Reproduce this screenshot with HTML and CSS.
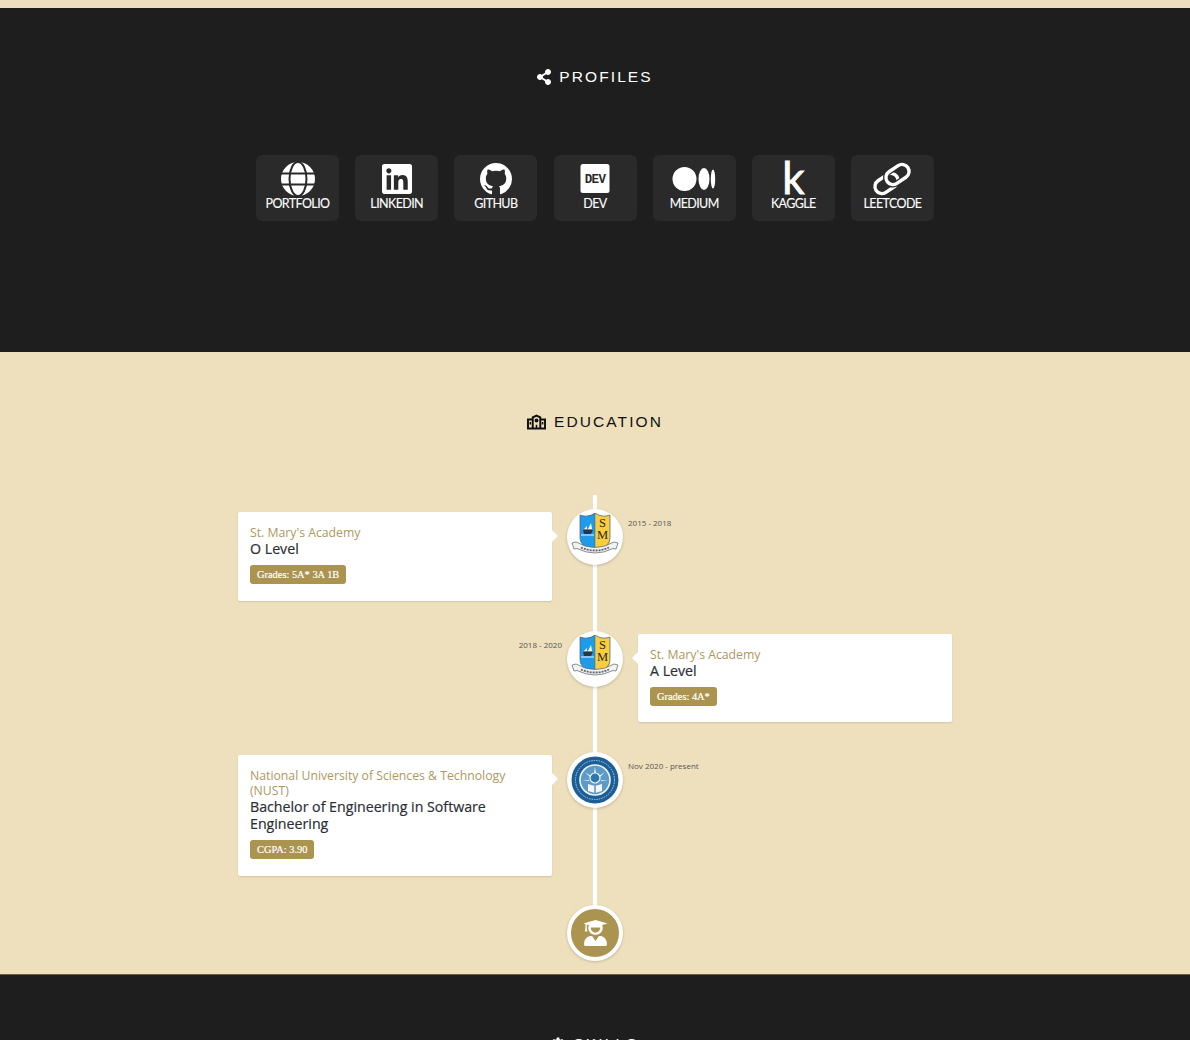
FILE: index.html
```html
<!DOCTYPE html>
<html lang="en">
<head>
  <meta charset="UTF-8">
  <meta name="viewport" content="width=device-width, initial-scale=1.0">
  <title>Portfolio</title>
  <link rel="stylesheet" href="styles.css">
</head>
<body>
  <div class="top-strip"></div>

  <!-- Profiles -->
  <section class="section dark profiles">
    <h2 class="section-title">
      <svg class="title-icon" viewBox="0 0 448 512"><path fill="currentColor" d="M352 320c-22.608 0-43.387 7.819-60.193 20.895l-102.486-64.054a96.551 96.551 0 0 0 0-41.683l102.486-64.054C308.613 184.181 329.392 192 352 192c53.019 0 96-42.981 96-96S405.019 0 352 0s-96 42.981-96 96c0 7.158.79 14.13 2.276 20.841L155.79 180.895C138.982 167.819 118.203 160 96 160c-53.019 0-96 42.981-96 96s42.981 96 96 96c22.608 0 43.387-7.819 60.193-20.895l102.486 64.054A96.301 96.301 0 0 0 256 416c0 53.019 42.981 96 96 96s96-42.981 96-96-42.981-96-96-96z"/></svg>
      PROFILES
    </h2>
    <div class="profile-list">
      <a class="profile" href="#">
        <svg class="profile-icon" viewBox="0 0 36 36">
          <circle cx="18" cy="18" r="17" fill="#fff"/>
          <g fill="none" stroke="#2a2a2a" stroke-width="2">
            <ellipse cx="18" cy="18" rx="8.500" ry="17"/>
            <path d="M0 12.500h36M0 23.500h36"/>
          </g>
        </svg>
        <span>PORTFOLIO</span>
      </a>
      <a class="profile" href="#">
        <svg class="profile-icon" viewBox="0 0 36 36"><g transform="translate(3 .8) scale(.067)"><path fill="#fff" d="M416 32H31.9C14.3 32 0 46.5 0 64.3v383.4C0 465.5 14.3 480 31.9 480H416c17.6 0 32-14.5 32-32.3V64.3c0-17.8-14.4-32.3-32-32.3zM135.4 416H69V202.2h66.5V416zm-33.2-243c-21.3 0-38.5-17.3-38.5-38.5S80.9 96 102.2 96c21.2 0 38.5 17.3 38.5 38.5 0 21.3-17.2 38.5-38.5 38.5zm282.1 243h-66.4V312c0-24.8-.5-56.7-34.5-56.7-34.6 0-39.9 27-39.9 54.9V416h-66.4V202.2h63.7v29.2h.9c8.9-16.8 30.6-34.5 62.9-34.5 67.2 0 79.7 44.3 79.7 101.9V416z"/></g></svg>
        <span>LINKEDIN</span>
      </a>
      <a class="profile" href="#">
        <svg class="profile-icon" viewBox="0 0 36 36"><g transform="translate(2 2) scale(2)"><path fill="#fff" d="M8 0C3.58 0 0 3.58 0 8c0 3.54 2.29 6.53 5.47 7.59.4.07.55-.17.55-.38 0-.19-.01-.82-.01-1.49-2.01.37-2.53-.49-2.69-.94-.09-.23-.48-.94-.82-1.13-.28-.15-.68-.52-.01-.53.63-.01 1.08.58 1.23.82.72 1.21 1.87.87 2.33.66.07-.52.28-.87.51-1.07-1.78-.2-3.64-.89-3.64-3.95 0-.87.31-1.59.82-2.15-.08-.2-.36-1.02.08-2.12 0 0 .67-.21 2.2.82.64-.18 1.32-.27 2-.27.68 0 1.36.09 2 .27 1.53-1.04 2.2-.82 2.2-.82.44 1.1.16 1.92.08 2.12.51.56.82 1.27.82 2.15 0 3.07-1.87 3.75-3.65 3.95.29.25.54.73.54 1.48 0 1.07-.01 1.93-.01 2.2 0 .21.15.46.55.38A8.013 8.013 0 0016 8c0-4.42-3.58-8-8-8z"/></g></svg>
        <span>GITHUB</span>
      </a>
      <a class="profile" href="#">
        <svg class="profile-icon" viewBox="0 0 36 36">
          <rect x="3.500" y="3" width="29" height="29" rx="2.500" fill="#fff"/>
          <text class="dev-mark" x="18" y="22" text-anchor="middle">DEV</text>
        </svg>
        <span>DEV</span>
      </a>
      <a class="profile" href="#">
        <svg class="profile-icon" viewBox="0 0 36 36" fill="#fff">
          <circle cx="8.500" cy="18" r="12"/>
          <ellipse cx="28" cy="18" rx="5.500" ry="11"/>
          <ellipse cx="37" cy="18" rx="2.200" ry="9.500"/>
        </svg>
        <span>MEDIUM</span>
      </a>
      <a class="profile" href="#">
        <span class="kaggle-mark">k</span>
        <span>KAGGLE</span>
      </a>
      <a class="profile" href="#">
        <svg class="profile-icon" viewBox="0 0 36 36" fill="none" stroke-width="3.400">
          <rect x="0" y="15.500" width="25" height="14" rx="7" stroke="#fff" transform="rotate(-34 12.500 22.500)"/>
          <rect x="11" y="6.500" width="25" height="14" rx="7" stroke="#2a2a2a" stroke-width="6" transform="rotate(-34 23.500 13.500)"/>
          <rect x="11" y="6.500" width="25" height="14" rx="7" stroke="#fff" transform="rotate(-34 23.500 13.500)"/>
        </svg>
        <span>LEETCODE</span>
      </a>
    </div>
  </section>

  <!-- Education -->
  <section class="section cream education">
    <h2 class="section-title">
      <svg class="title-icon school" viewBox="0 0 24 19">
        <path fill="currentColor" fill-rule="evenodd" d="M12 0l6 3v2h6v14H0V5h6V3zM2.500 7.500v9H6v-9zm15.500 0v9h3.500v-9zM8.500 4.500v12H11v-3.500h2v3.500h2.500v-12L12 2.800zM12 5a2.500 2.500 0 1 1 0 5 2.500 2.500 0 0 1 0-5zM3.200 9.500h2v3h-2zm15.500 0h2v3h-2z"/>
      </svg>
      EDUCATION
    </h2>

    <div class="timeline">
      <div class="tl-row">
        <div class="tl-card">
          <p class="tl-school">St. Mary's Academy</p>
          <h3 class="tl-degree">O Level</h3>
          <span class="tl-badge">Grades: 5A* 3A 1B</span>
        </div>
        <div class="tl-icon">
          <svg viewBox="0 0 48 48">
            <path d="M9 2q8 3 15-2v38q-11-2-14-9q-1-2-1-5z" fill="#1f9bea"/>
            <path d="M24 0q7 5 15 2v24q0 3-1 5q-3 6-14 7z" fill="#f8cd3e"/>
            <path d="M24 38q-11-2-14-9q-1-2-1-5V2q8 3 15-2q7 5 15 2v22q0 3-1 5q-3 7-14 9z" fill="none" stroke="#3f5f7d" stroke-width=".7"/>
            <path d="M24 0v36" stroke="#3f5f7d" stroke-width=".5"/>
            <path d="M17 16l3-6 1 6zM13 16l3-3v3z" fill="#fff"/>
            <path d="M12 17h10l-2 4h-7z" fill="#22384c"/>
            <path d="M10 22h13" stroke="#e8f4fc" stroke-width="1"/>
            <text class="crest-letter" x="31.500" y="13.500">S</text>
            <text class="crest-letter" x="31.500" y="26">M</text>
            <path d="M1 30l4-1q19 11 38 0l4 1-2 6-3-.5q-18 9-36 0l-3 .5z" fill="#f2f2f0" stroke="#6c747c" stroke-width=".8"/>
            <path d="M10 34.500q14 6 28 0" fill="none" stroke="#5b6570" stroke-width="1.800" stroke-dasharray="2 1"/>
          </svg>
        </div>
        <time class="tl-date">2015 - 2018</time>
      </div>

      <div class="tl-row">
        <time class="tl-date">2018 - 2020</time>
        <div class="tl-icon">
          <svg viewBox="0 0 48 48">
            <path d="M9 2q8 3 15-2v38q-11-2-14-9q-1-2-1-5z" fill="#1f9bea"/>
            <path d="M24 0q7 5 15 2v24q0 3-1 5q-3 6-14 7z" fill="#f8cd3e"/>
            <path d="M24 38q-11-2-14-9q-1-2-1-5V2q8 3 15-2q7 5 15 2v22q0 3-1 5q-3 7-14 9z" fill="none" stroke="#3f5f7d" stroke-width=".7"/>
            <path d="M24 0v36" stroke="#3f5f7d" stroke-width=".5"/>
            <path d="M17 16l3-6 1 6zM13 16l3-3v3z" fill="#fff"/>
            <path d="M12 17h10l-2 4h-7z" fill="#22384c"/>
            <path d="M10 22h13" stroke="#e8f4fc" stroke-width="1"/>
            <text class="crest-letter" x="31.500" y="13.500">S</text>
            <text class="crest-letter" x="31.500" y="26">M</text>
            <path d="M1 30l4-1q19 11 38 0l4 1-2 6-3-.5q-18 9-36 0l-3 .5z" fill="#f2f2f0" stroke="#6c747c" stroke-width=".8"/>
            <path d="M10 34.500q14 6 28 0" fill="none" stroke="#5b6570" stroke-width="1.800" stroke-dasharray="2 1"/>
          </svg>
        </div>
        <div class="tl-card">
          <p class="tl-school">St. Mary's Academy</p>
          <h3 class="tl-degree">A Level</h3>
          <span class="tl-badge">Grades: 4A*</span>
        </div>
      </div>

      <div class="tl-row">
        <div class="tl-card">
          <p class="tl-school">National University of Sciences &amp; Technology (NUST)</p>
          <h3 class="tl-degree">Bachelor of Engineering in Software Engineering</h3>
          <span class="tl-badge">CGPA: 3.90</span>
        </div>
        <div class="tl-icon">
          <svg viewBox="0 0 48 48">
            <circle cx="24" cy="24" r="23.500" fill="#1c5f98"/>
            <circle cx="24" cy="24" r="19.500" fill="none" stroke="#cfe0ee" stroke-width=".8" stroke-dasharray="1.500 1"/>
            <circle cx="24" cy="24" r="15" fill="#5d9ac6" stroke="#eef4f8" stroke-width="1.600"/>
            <path d="M24 11l1 6h-2zM14 16l6 4-1 1zM34 16l-6 4 1 1zM11 25l7-1v1zM37 25l-7-1v1z" fill="#eaf2f8"/>
            <circle cx="24" cy="22" r="5" fill="#2b78b3" stroke="#eef4f8" stroke-width="1.200"/>
            <path d="M17 28l7 2 7-2v7l-7 2-7-2z" fill="#f2f6f9"/>
            <path d="M24 30v7" stroke="#1c5f98"/>
          </svg>
        </div>
        <time class="tl-date">Nov 2020 - present</time>
      </div>

      <div class="tl-row tl-end">
        <div class="tl-icon tl-icon-gold">
          <svg viewBox="0 0 448 512"><path fill="#fff" d="M224 0L448 62v10L356 100c8 18 10 36 10 56 0 76-62 134-142 134S82 232 82 156c0-20 4-38 10-56L52 90v62l10 76H14l12-76V84L0 74V62zM130 150c0 58 40 98 94 98s94-40 94-98zM128 316c10-4 22-2 32 4l64 92 64-92c10-6 22-8 32-4 74 10 128 70 128 144v20c0 18-14 32-32 32H32c-18 0-32-14-32-32v-20c0-74 54-134 128-144z"/></svg>
        </div>
      </div>
    </div>
  </section>

  <!-- Skills -->
  <section class="section dark">
    <h2 class="section-title">
      <svg class="title-icon" viewBox="0 0 24 24"><path fill="currentColor" fill-rule="evenodd" d="M10 1h4l.6 3 2 .9 2.600-1.600 2.800 2.800-1.600 2.600.9 2 3 .6v4l-3 .6-.9 2 1.600 2.600-2.800 2.800-2.600-1.600-2 .9-.6 3h-4l-.6-3-2-.9-2.600 1.600-2.800-2.800 1.600-2.600-.9-2-3-.6v-4l3-.6.9-2L2 6.100 4.800 3.300l2.600 1.600 2-.9zM12 8.500a3.500 3.500 0 1 0 0 7 3.500 3.500 0 0 0 0-7z"/></svg>
      SKILLS
    </h2>
  </section>
</body>
</html>
```

FILE: styles.css
```css
/* Global Reset */
* {
  margin: 0;
  padding: 0;
  box-sizing: border-box;
}

html, body {
  height: 1040px;
  overflow: hidden;
}

body {
  background-color: #1e1e1e;
  font-family: 'Open Sans', sans-serif;
}

.top-strip {
  height: 8px;
  background-color: #eee0bd;
}

/* Sections */
.section {
  padding-top: 60px;
}

.dark {
  background-color: #1e1e1e;
  color: #fff;
}

.cream {
  background-color: #eee0bd;
  color: #111;
  border-bottom: 1px solid #6b5f45;
}

.profiles {
  height: 344px;
}

.education {
  height: 623px;
  padding-top: 61px;
}

.section-title {
  display: flex;
  justify-content: center;
  align-items: center;
  gap: 8px;
  height: 18px;
  font-family: 'Liberation Sans', sans-serif;
  font-size: 15.5px;
  font-weight: 400;
  letter-spacing: 2.1px;
}

.title-icon {
  width: 14px;
  height: 16px;
  color: inherit;
}

.title-icon.school {
  width: 19px;
}

/* Profile buttons */
.profile-list {
  display: flex;
  justify-content: center;
  gap: 16.17px;
  margin-top: 69px;
}

.profile {
  display: flex;
  flex-direction: column;
  align-items: center;
  width: 83px;
  height: 66px;
  padding-top: 6px;
  background-color: #2a2a2a;
  border-radius: 6px;
  color: #fff;
  text-decoration: none;
  font-family: 'Lato', sans-serif;
  font-size: 12.5px;
  line-height: 16px;
  letter-spacing: -0.6px;
  -webkit-text-stroke: 0.1px #fff;
}

.profile-icon {
  width: 36px;
  height: 36px;
  margin-bottom: -1px;
  flex: none;
  overflow: visible;
}

.dev-mark {
  font-family: 'Liberation Mono', monospace;
  font-size: 12.5px;
  font-weight: 700;
  stroke: none;
  fill: #2a2a2a;
}

.kaggle-mark {
  height: 35px;
  font-size: 44px;
  font-weight: 400;
  line-height: 32px;
  letter-spacing: 0;
  -webkit-text-stroke: 0.8px #fff;
}

/* Timeline */
.timeline {
  position: relative;
  display: flex;
  flex-direction: column;
  gap: 33px;
  width: 714px;
  margin: 64px auto 0;
  padding-top: 17px;
}

.timeline::before {
  content: "";
  position: absolute;
  top: 0;
  bottom: 14px;
  left: 355px;
  width: 4px;
  background-color: #fff;
}

.tl-row {
  position: relative;
  display: grid;
  grid-template-columns: 1fr 56px 1fr;
  column-gap: 15px;
}

.tl-card {
  position: relative;
  padding: 13px 12px 16.5px;
  background-color: #fff;
  border-radius: 2px;
  box-shadow: 0 1px 2px rgba(0, 0, 0, 0.12);
}

/* little arrow pointing at the circle */
.tl-card::after {
  content: "";
  position: absolute;
  top: 18px;
  left: 100%;
  border: 6px solid transparent;
  border-left-color: #fff;
}

.tl-row > .tl-icon + .tl-card::after {
  left: auto;
  right: 100%;
  border-left-color: transparent;
  border-right-color: #fff;
}

.tl-school {
  font-size: 12.25px;
  line-height: 15px;
  color: #ad9862;
}

.tl-degree {
  font-size: 14.2px;
  font-weight: 400;
  line-height: 17px;
  color: #2b2f36;
  -webkit-text-stroke: 0.2px #2b2f36;
  margin-bottom: 8px;
}

.tl-badge {
  display: block;
  width: fit-content;
  height: 19px;
  padding: 0 7px;
  background-color: #ab9350;
  border-radius: 3px;
  color: #fff;
  font-family: 'Liberation Serif', serif;
  font-size: 10.4px;
  line-height: 19px;
  -webkit-text-stroke: 0.2px #fff;
}

.tl-icon {
  display: flex;
  justify-content: center;
  align-items: center;
  width: 56px;
  height: 56px;
  margin-top: -3px;
  background-color: #fff;
  border-radius: 50%;
  box-shadow: 0 1px 3px rgba(0, 0, 0, 0.2);
}

.tl-icon svg {
  width: 48px;
  height: 48px;
}

.crest-letter {
  font-family: 'Liberation Serif', serif;
  font-size: 12.5px;
  text-anchor: middle;
  fill: #2a2a1a;
}

.tl-icon-gold {
  background-color: #ab9350;
  border: 4px solid #fff;
}

.tl-icon-gold svg {
  width: 23px;
  height: 26px;
}

.tl-end {
  margin-top: -1px;
}

.tl-end .tl-icon {
  grid-column: 2;
}

.tl-date {
  margin-top: 5px;
  font-size: 8px;
  line-height: 12px;
  color: #555;
}

.tl-row > .tl-date:first-child {
  text-align: right;
  margin-right: -10px;
}

.tl-row > .tl-icon + .tl-date {
  margin-left: -10px;
}
```
